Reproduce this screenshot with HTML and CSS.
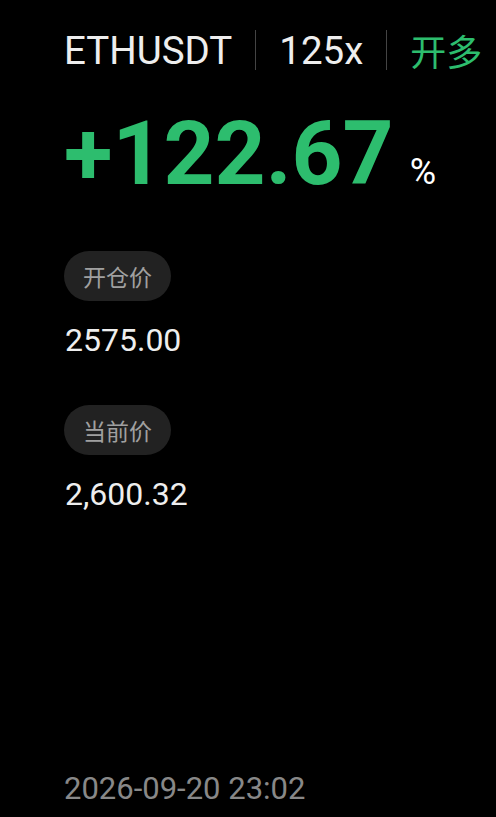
FILE: index.html
```html
<!DOCTYPE html>
<html>
<head>
  <title>ETHUSDT</title>
  <meta name="viewport" content="width=device-width, initial-scale=1.0" />
  <link rel="stylesheet" href="styles.css">
</head>
<body>

  <div class="card">
    <div class="header">
      <span class="symbol">ETHUSDT</span>
      <span class="divider"></span>
      <span class="lever">125x</span>
      <span class="divider"></span>
      <span class="side">开多</span>
    </div>

    <div class="pnl">
      <span class="pnl-value">+122.67</span>
      <span class="pnl-unit">%</span>
    </div>

    <div class="field">
      <span class="tag">开仓价</span>
      <div class="price">2575.00</div>
    </div>

    <div class="field">
      <span class="tag">当前价</span>
      <div class="price">2,600.32</div>
    </div>

    <div class="time">2026-09-20 23:02</div>
  </div>

</body>
</html>
```

FILE: styles.css
```css
body {
  margin: 0;
  background-color: #000;
  color: #eee;
  font-family: Roboto, "Noto Sans CJK SC", sans-serif;
}

.card {
  display: flex;
  flex-direction: column;
  align-items: flex-start;
  height: 817px;
  padding: 0 0 0 64px;
  box-sizing: border-box;
}

.header {
  display: flex;
  align-items: center;
  height: 40px;
  margin-top: 30px;
  font-size: 38.5px;
  color: #eee;
}

.divider {
  width: 1px;
  height: 40px;
  background-color: #444;
  margin: 0 23px;
}

.side {
  color: #2dbd6e;
  font-size: 36px;
}

.pnl {
  display: flex;
  align-items: baseline;
  margin-top: 31px;
  margin-bottom: 45px;
}

.pnl-value {
  font-size: 89px;
  font-weight: bold;
  color: #2dbd6e;
}

.pnl-unit {
  font-size: 36px;
  margin-left: 16px;
  color: #fff;
}

.field {
  display: flex;
  flex-direction: column;
  align-items: flex-start;
}

.tag {
  display: flex;
  align-items: center;
  height: 50px;
  padding: 0 19px;
  border-radius: 25px;
  background-color: #222;
  color: #a0a0a0;
  font-size: 23px;
}

.price {
  font-size: 32px;
  margin: 20px 0 46px 1px;
}

.time {
  margin-top: auto;
  margin-bottom: 10px;
  font-size: 31px;
  color: #888;
}
```
